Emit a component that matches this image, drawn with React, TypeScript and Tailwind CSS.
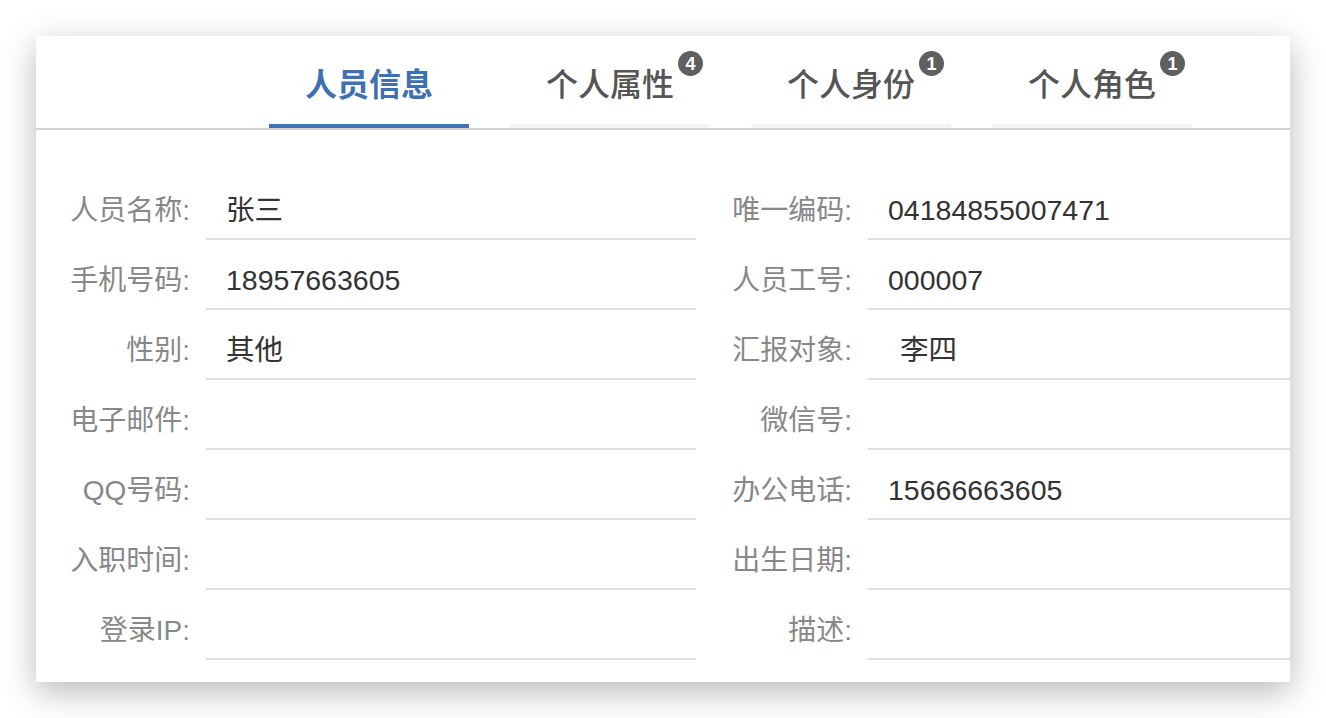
import React from 'react'

const tabs = [
  { name: '人员信息', badge: 0 },
  { name: '个人属性', badge: 4 },
  { name: '个人身份', badge: 1 },
  { name: '个人角色', badge: 1 },
]

const rows: [string, string, string, string][] = [
  ['人员名称:', '张三', '唯一编码:', '04184855007471'],
  ['手机号码:', '18957663605', '人员工号:', '000007'],
  ['性别:', '其他', '汇报对象:', '李四'],
  ['电子邮件:', '', '微信号:', ''],
  ['QQ号码:', '', '办公电话:', '15666663605'],
  ['入职时间:', '', '出生日期:', ''],
  ['登录IP:', '', '描述:', ''],
]

function Label({ text }: { text: string }) {
  return (
    <div className="h-[70px] flex items-center justify-end pt-[12px] pr-[16px] text-[28px] text-[#888]">
      {text}
    </div>
  )
}

function Value({ text, indent }: { text: string; indent?: boolean }) {
  return (
    <div
      className={
        'h-[70px] flex items-center pt-[12px] border-b-2 border-[#e0e0e0] text-[28.5px] text-[#333] ' +
        (indent ? 'pl-[32px]' : 'pl-[20px]')
      }
    >
      {text}
    </div>
  )
}

export default function App() {
  return (
    <div
      className="min-h-screen bg-white pt-[36px] pl-[36px]"
      style={{ fontFamily: '"Liberation Sans", "Noto Sans CJK SC", sans-serif' }}
    >
      <div className="w-[1254px] h-[646px] bg-white shadow-[0_10px_32px_rgba(0,0,0,0.28)]">
        {/* tabs */}
        <div className="h-[94px] border-b-2 border-[#d0d0d0] flex pl-[233px] gap-[41px]">
          {tabs.map((t, i) => (
            <div key={t.name} className="w-[200px] flex flex-col">
              <div className="flex-1 flex items-center justify-center pt-[10px]">
                <span
                  className={
                    'relative text-[32px] leading-none ' +
                    (i === 0 ? 'text-[#3f71b0] font-bold' : 'text-[#555] font-medium')
                  }
                >
                  {t.name}
                  {t.badge > 0 && (
                    <span className="absolute -right-[29px] -top-[18px] w-[25px] h-[25px] rounded-full bg-[#5f5f5f] text-white text-[18px] font-bold flex items-center justify-center">
                      {t.badge}
                    </span>
                  )}
                </span>
              </div>
              <div className={'h-[4px] ' + (i === 0 ? 'bg-[#4273b0]' : 'bg-[#f5f5f5]')} />
            </div>
          ))}
        </div>

        {/* form */}
        <div className="pt-[40px] grid grid-cols-[170px_490px_172px_1fr]">
          {rows.map(([l1, v1, l2, v2]) => (
            <React.Fragment key={l1}>
              <Label text={l1} />
              <Value text={v1} />
              <Label text={l2} />
              <Value text={v2} indent={l2 === '汇报对象:'} />
            </React.Fragment>
          ))}
        </div>
      </div>
    </div>
  )
}
